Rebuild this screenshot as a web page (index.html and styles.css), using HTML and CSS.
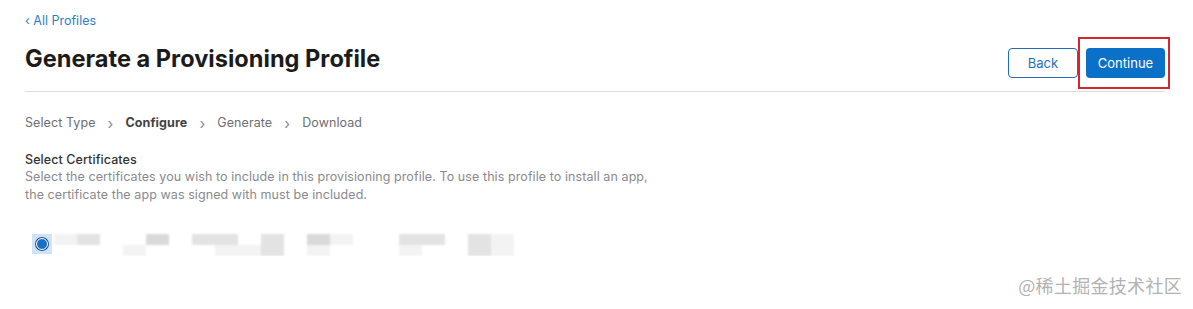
FILE: index.html
```html
<!DOCTYPE html>
<html>
  <head>
    <title>Generate a Provisioning Profile</title>
    <link rel="stylesheet" href="styles.css">
  </head>
  <body>
    <div class="page">
      <a href="#" class="back-link">&lsaquo; All Profiles</a>

      <div class="title-bar">
        <h1>Generate a Provisioning Profile</h1>
        <div class="actions">
          <button class="btn btn-outline">Back</button>
          <div class="highlight">
            <button class="btn btn-primary">Continue</button>
          </div>
        </div>
      </div>

      <ol class="steps">
        <li>Select Type</li>
        <li class="sep">&rsaquo;</li>
        <li class="current">Configure</li>
        <li class="sep">&rsaquo;</li>
        <li>Generate</li>
        <li class="sep">&rsaquo;</li>
        <li>Download</li>
      </ol>

      <div class="section">
        <h2>Select Certificates</h2>
        <p>Select the certificates you wish to include in this provisioning profile. To use this profile to install an app,<br>
        the certificate the app was signed with must be included.</p>
      </div>

      <div class="cert-row">
        <span class="radio"><span class="dot"></span></span>
        <!-- name is pixelated out in the screenshot -->
        <div class="mosaic">
          <i class="c0 r1 t1"></i>
          <i class="c1 r1 t2"></i>
          <i class="c3 r2 t4"></i>
          <i class="c4 r1 t3"></i>
          <i class="c6 r1 t2 w2"></i>
          <i class="c7 r2 t4 w2"></i>
          <i class="c9 r1 t2 h2"></i>
          <i class="c11 r1 t3"></i>
          <i class="c12 r1 t4"></i>
          <i class="c11 r2 t4"></i>
          <i class="c15 r1 t2 w2"></i>
          <i class="c15 r2 t4"></i>
          <i class="c18 r1 t2 h2"></i>
          <i class="c19 r1 t4 h2"></i>
        </div>
      </div>
    </div>

    <div class="watermark">@稀土掘金技术社区</div>
  </body>
</html>
```

FILE: styles.css
```css
  body {
    margin: 0;
    font-family: Inter, "Noto Sans", sans-serif;
    color: #1d1d1f;
    background: #fff;
  }

  .page {
    padding: 9px 28px 0 25px;
  }

  /* top link + title */
  .back-link {
    display: inline-block;
    font-size: 12.5px;
    color: #2d7fc1;
    text-decoration: none;
  }

  .title-bar {
    display: flex;
    justify-content: space-between;
    align-items: center;
    margin-top: 8px;
    padding-bottom: 2px;
    border-bottom: 1px solid #dcdcdc;
  }

  .title-bar h1 {
    margin: 0 0 10px;
    font-size: 23.6px;
    font-weight: 700;
    color: #1b1b1b;
  }

  .actions {
    display: flex;
    align-items: center;
    margin-right: -5px;
  }

  .highlight {
    border: 2px solid #d4262b;
    padding: 9px 3px 9px 6px;
  }

  .btn {
    height: 30px;
    font-family: inherit;
    font-size: 13px;
    border-radius: 4px;
    cursor: pointer;
  }

  .btn-outline {
    width: 70px;
    background: #fff;
    color: #1f6fb5;
    border: 1px solid #1f6fb5;
  }

  .btn-primary {
    width: 79px;
    background: #0a70c8;
    color: #fff;
    border: none;
  }

  /* wizard steps */
  .steps {
    display: flex;
    list-style: none;
    margin: 23px 0 0;
    padding: 0;
    font-size: 12.5px;
    letter-spacing: 0.08px;
    color: #6e6e73;
  }

  .steps .sep {
    width: 30px;
    text-align: center;
    font-size: 15px;
    line-height: 17px;
    color: #8a8a8e;
  }

  .steps .current {
    font-weight: 700;
    color: #444;
  }

  /* certificates */
  .section {
    margin-top: 20px;
    letter-spacing: 0.08px;
  }

  .section h2 {
    margin: 0;
    font-size: 12.5px;
    font-weight: 500;
    color: #333;
  }

  .section p {
    margin: 1px 0 0;
    font-size: 12.5px;
    line-height: 18px;
    color: #8a8a8e;
  }

  .cert-row {
    display: flex;
    align-items: center;
    margin-top: 27px;
    margin-left: 7px;
  }

  .radio {
    display: flex;
    align-items: center;
    justify-content: center;
    width: 20px;
    height: 20px;
    background: #cfe3f7;
  }

  .radio .dot {
    width: 10px;
    height: 10px;
    border-radius: 50%;
    background: #1a70c6;
    border: 1px solid #fff;
    box-shadow: 0 0 0 1px #1e4f86;
  }

  .mosaic {
    display: grid;
    grid-template-columns: repeat(20, 23px);
    grid-template-rows: 11px 11px;
    margin-left: 2px;
    margin-top: 3px;
    filter: blur(0.8px);
  }

  .mosaic i { display: block; }
  .mosaic .c0 { grid-column: 1; }
  .mosaic .c1 { grid-column: 2; }
  .mosaic .c3 { grid-column: 4; }
  .mosaic .c4 { grid-column: 5; }
  .mosaic .c6 { grid-column: 7; }
  .mosaic .c7 { grid-column: 8; }
  .mosaic .c9 { grid-column: 10; }
  .mosaic .c11 { grid-column: 12; }
  .mosaic .c12 { grid-column: 13; }
  .mosaic .c15 { grid-column: 16; }
  .mosaic .c18 { grid-column: 19; }
  .mosaic .c19 { grid-column: 20; }
  .mosaic .w2 { grid-column-end: span 2; }
  .mosaic .r1 { grid-row: 1; }
  .mosaic .r2 { grid-row: 2; }
  .mosaic .h2 { grid-row: 1 / span 2; }
  .mosaic .t1 { background: #f2f2f2; }
  .mosaic .t2 { background: #e3e3e3; }
  .mosaic .t3 { background: #d9d9d9; }
  .mosaic .t4 { background: #f3f3f3; }

  .watermark {
    position: absolute;
    right: 11px;
    bottom: 11px;
    font-family: "Noto Sans CJK SC", sans-serif;
    font-size: 18px;
    color: #b2b2b2;
    letter-spacing: 0.3px;
  }
```
